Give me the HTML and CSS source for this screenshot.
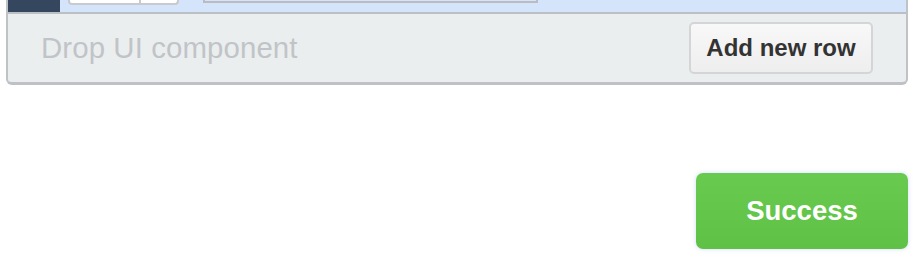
FILE: index.html
```html
<!DOCTYPE html>
<html>
<head>
<meta charset="utf-8">
<link rel="stylesheet" href="styles.css">
</head>
<body>
<div class="panel">
  <div class="toprow">
    <div class="dark-block"></div>
    <div class="seg-input">
      <div class="seg-a"></div>
      <div class="seg-b"></div>
    </div>
    <div class="wide-input"></div>
  </div>
  <div class="footer">
    <span class="drop-text">Drop UI component</span>
    <button class="btn-add">Add new row</button>
  </div>
</div>
<div class="actions">
  <button class="btn-success">Success</button>
</div>
<div class="bottom-band"></div>
</body>
</html>
```
FILE: styles.css
```css
html, body {
  margin: 0;
  padding: 0;
  background: #ffffff;
  font-family: "Liberation Sans", Arial, Helvetica, sans-serif;
}
body {
  width: 920px;
  height: 262px;
  overflow: hidden;
  position: relative;
}
.panel {
  margin-left: 6px;
  width: 902px;
  box-sizing: border-box;
  border-left: 2px solid #c0c3c6;
  border-right: 2px solid #c0c3c6;
  border-bottom: 3px solid #bfc1c4;
  border-radius: 0 0 6px 6px;
  background: #ebeeef;
  overflow: hidden;
}
.toprow {
  height: 12px;
  background: #d4e4fb;
  border-bottom: 2px solid #bcc0c5;
  display: flex;
  align-items: flex-start;
}
.dark-block {
  width: 52px;
  height: 12px;
  background: #35475e;
}
.seg-input {
  margin-left: 8px;
  width: 111px;
  height: 5px;
  box-sizing: border-box;
  border: 2px solid #c9cacc;
  border-top: none;
  border-radius: 0 0 4px 4px;
  background: #ffffff;
  display: flex;
}
.seg-a {
  width: 69px;
  height: 100%;
  border-right: 2px solid #c9cacc;
}
.seg-b {
  flex: 1;
}
.wide-input {
  margin-left: 24px;
  width: 335px;
  height: 3px;
  box-sizing: border-box;
  border: 2px solid #b9bdc3;
  border-top: none;
  background: #d8e4f6;
}
.footer {
  height: 68px;
  display: flex;
  align-items: center;
  justify-content: space-between;
  padding: 0 33px;
}
.drop-text {
  font-size: 29.4px;
  color: #c1c4c7;
  letter-spacing: 0.1px;
}
.btn-add {
  width: 184px;
  height: 52px;
  box-sizing: border-box;
  border: 2px solid #d3d5d7;
  border-radius: 5px;
  background: linear-gradient(#f8f8f8, #eeeeee);
  color: #333333;
  font-family: "Liberation Sans", Arial, Helvetica, sans-serif;
  font-weight: bold;
  font-size: 24px;
  padding: 0;
  margin-top: 0;
}
.actions {
  display: flex;
  justify-content: flex-end;
  padding-right: 12px;
  margin-top: 88px;
}
.btn-success {
  width: 212px;
  height: 76px;
  border: none;
  border-radius: 7px;
  background: linear-gradient(#68cb4f, #5fc146);
  box-shadow: 0 0 4px rgba(120, 150, 240, 0.35);
  color: #ffffff;
  font-family: "Liberation Sans", Arial, Helvetica, sans-serif;
  font-weight: bold;
  font-size: 27.5px;
  padding: 0;
}
.bottom-band {
  position: absolute;
  left: 0;
  right: 0;
  bottom: 0;
  height: 11px;
  background: #f8f9fa;
  z-index: -1;
}
```
